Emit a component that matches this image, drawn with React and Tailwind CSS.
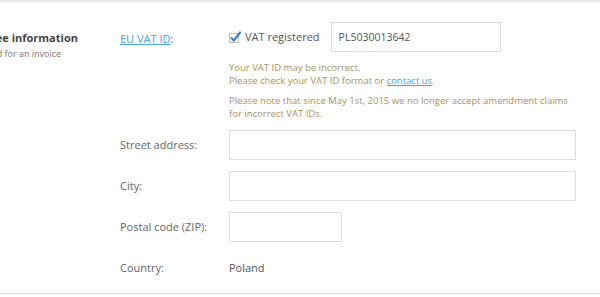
import { useState } from "react";

const FONT = { fontFamily: '"Open Sans", "Noto Sans", sans-serif' };

function CheckMark({ checked }) {
  return (
    <svg width="13" height="13" viewBox="0 0 13 13" className="shrink-0">
      <rect x="0.5" y="2.5" width="9" height="9" fill="#fff" stroke="#bcbcbc" />
      {checked && (
        <path d="M2.5 7 L4.8 9.6 L11 1.5" fill="none" stroke="#3d7fc4" strokeWidth="2.2" strokeLinecap="round" strokeLinejoin="round" />
      )}
    </svg>
  );
}

export default function App() {
  const [vat, setVat] = useState("PL5030013642");
  const [registered, setRegistered] = useState(true);

  return (
    <div style={FONT} className="w-[600px] h-[297px] bg-white overflow-hidden text-[#666]">
      <div className="h-[3px] bg-gradient-to-b from-[#e6e6e6] to-[#f4f4f4]" />

      <div className="flex h-[291px] border-b border-[#dcdcdc]">
        {/* Section heading */}
        <div className="w-[144px] -ml-[24px] shrink-0 pt-[27px]">
          <h3 className="text-[11px] font-bold text-[#444] leading-[16px]">Payee information</h3>
          <p className="-ml-[12px] text-[9px] text-[#777] leading-[16px]">Required for an invoice</p>
        </div>

        {/* Form */}
        <div className="flex-1 pt-[19px]">
          <div className="flex">
            <div className="w-[109px] shrink-0 pt-[8px] text-[11px] leading-[17px]">
              <a href="#" className="text-[#4aa3df] underline">EU VAT ID</a>:
            </div>
            <div className="flex-1">
              <div className="flex items-center">
                <label className="flex items-center gap-[3px] cursor-pointer" onClick={() => setRegistered(!registered)}>
                  <CheckMark checked={registered} />
                  <span className="text-[11px] text-[#555]">VAT registered</span>
                </label>
                <input
                  value={vat}
                  onChange={(e) => setVat(e.target.value)}
                  className="ml-[11px] w-[170px] h-[30px] px-[7px] border border-[#ddd] text-[10.5px] text-[#555] outline-none"
                />
              </div>
              <div className="mt-[9px] text-[9.5px] leading-[13px] text-[#a8925f]">
                <p>Your VAT ID may be incorrect.</p>
                <p>
                  Please check your VAT ID format or{" "}
                  <a href="#" className="text-[#4aa3df] underline">contact us</a>.
                </p>
                <p className="mt-[7px]">
                  Please note that since May 1st, 2015 we no longer accept amendment claims
                  <br />
                  for incorrect VAT IDs.
                </p>
              </div>
            </div>
          </div>

          <div className="mt-[10px] flex flex-col gap-[11px] text-[11px]">
            <div className="flex items-center">
              <span className="w-[109px] shrink-0">Street address:</span>
              <input className="w-[347px] h-[30px] border border-[#ddd] outline-none px-2" />
            </div>
            <div className="flex items-center">
              <span className="w-[109px] shrink-0">City:</span>
              <input className="w-[347px] h-[30px] border border-[#ddd] outline-none px-2" />
            </div>
            <div className="flex items-center">
              <span className="w-[109px] shrink-0">Postal code (ZIP):</span>
              <input className="w-[113px] h-[30px] border border-[#ddd] outline-none px-2" />
            </div>
            <div className="flex items-center h-[30px]">
              <span className="w-[109px] shrink-0">Country:</span>
              <span className="text-[#555]">Poland</span>
            </div>
          </div>
        </div>
      </div>
    </div>
  );
}
